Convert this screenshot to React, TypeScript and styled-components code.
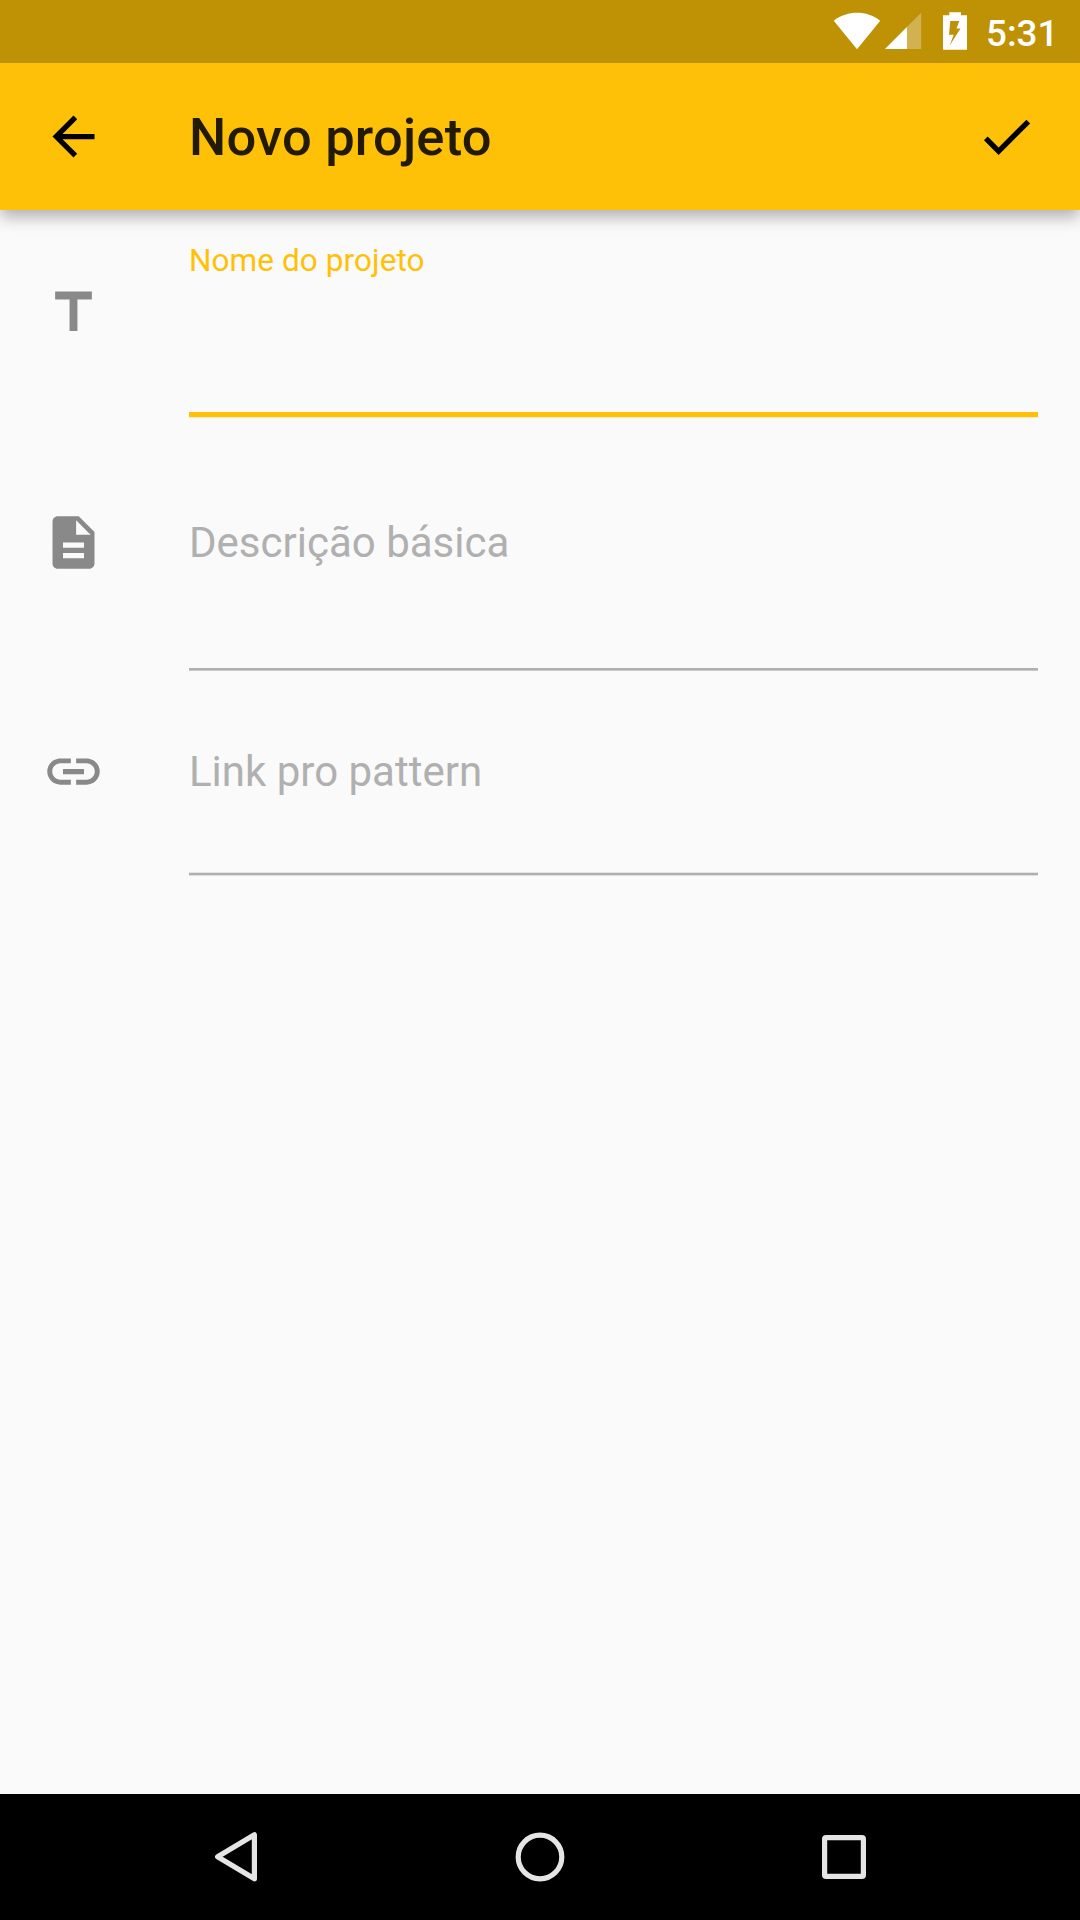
import React from "react";
import styled, { createGlobalStyle } from "styled-components";

const amber = "#ffc107";

const GlobalStyle = createGlobalStyle`
  *, *::before, *::after { box-sizing: border-box; }
  html, body { margin: 0; padding: 0; background: #fafafa; }
  body { font-family: Roboto, "Noto Sans", sans-serif; }
`;

const Screen = styled.div`
  display: flex;
  flex-direction: column;
  width: 1080px;
  height: 1920px;
  overflow: hidden;
  background: #fafafa;
`;

const StatusBar = styled.div`
  position: relative;
  z-index: 2;
  display: flex;
  flex: none;
  justify-content: flex-end;
  height: 63px;
  padding-right: 26px;
  background: #bf9105;
  color: #fff;
`;

const StatusIcons = styled.svg`
  width: 146px;
  height: 63px;
  margin-right: 6px;
`;

const Clock = styled.time`
  width: 68px;
  font-size: 36.75px;
  font-weight: 500;
  line-height: 67px;
  white-space: nowrap;
`;

const AppBar = styled.header`
  position: relative;
  z-index: 1;
  display: flex;
  flex: none;
  align-items: center;
  height: 147px;
  padding: 0 42px;
  background: ${amber};
  box-shadow:
    0 5px 14px -3px rgba(0, 0, 0, 0.15),
    0 10px 14px 0 rgba(0, 0, 0, 0.14),
    0 3px 20px 0 rgba(0, 0, 0, 0.08);
`;

const Title = styled.h1`
  flex: 1;
  margin: 0 0 0 84px;
  color: #221b02;
  font-size: 52.5px;
  font-weight: 500;
  line-height: 62px;
  letter-spacing: 0.2px;
`;

const IconButton = styled.button`
  display: block;
  padding: 0;
  border: 0;
  background: none;
  color: #000;
  line-height: 0;
`;

const Icon = styled.svg`
  display: block;
  width: 63px;
  height: 63px;
  fill: currentColor;
`;

const Form = styled.form`
  display: flex;
  flex: 1;
  flex-direction: column;
  padding: 0 42px;
`;

const FieldRow = styled.div<{ $height: number }>`
  display: flex;
  gap: 84px;
  height: ${(p) => p.$height}px;
`;

const Leading = styled.div<{ $top: number }>`
  padding-top: ${(p) => p.$top}px;
  color: #898989;
`;

const Field = styled.label<{ $top: number }>`
  display: flex;
  flex: 1;
  flex-direction: column;
  justify-content: space-between;
  padding-top: ${(p) => p.$top}px;
`;

const Label = styled.span<{ $active?: boolean }>`
  color: ${(p) => (p.$active ? amber : "#b0b0b0")};
  font-size: ${(p) => (p.$active ? 31.5 : 42)}px;
  line-height: ${(p) => (p.$active ? 38 : 50)}px;
  letter-spacing: ${(p) => (p.$active ? 0.08 : 0)}px;
`;

type LineKind = "active" | "upper" | "centered";

const lineStyles: Record<LineKind, { height: number; fill: string }> = {
  active: { height: 6, fill: `linear-gradient(${amber} 5px, #fbecc0 5px)` },
  upper: { height: 3, fill: "linear-gradient(#b0b0b0 2px, #c8c8c8 2px)" },
  centered: {
    height: 4,
    fill: "linear-gradient(#e4e4e4 1px, #b0b0b0 1px 3px, #dedede 3px)",
  },
};

const Underline = styled.div<{ $kind: LineKind }>`
  height: ${(p) => lineStyles[p.$kind].height}px;
  background: ${(p) => lineStyles[p.$kind].fill};
`;

const NavBar = styled.nav`
  display: flex;
  flex: none;
  align-items: center;
  justify-content: center;
  gap: 240px;
  height: 126px;
  background: #000;
`;

const NavIcon = styled.svg`
  width: 64px;
  height: 64px;
  fill: none;
  stroke: #e5e5e5;
  stroke-width: 5.2;
  stroke-linejoin: round;
`;

const icons = {
  back: "M20 11H7.83l5.59-5.59L12 4l-8 8 8 8 1.41-1.41L7.83 13H20v-2z",
  check: "M9 16.17L4.83 12l-1.42 1.41L9 19 21 7l-1.41-1.41z",
  title: "M5 4v3h5.5v12h3V7H19V4z",
  description:
    "M14 2H6c-1.1 0-1.99.9-1.99 2L4 20c0 1.1.89 2 1.99 2H18c1.1 0 2-.9 2-2V8l-6-6zm2 16H8v-2h8v2zm0-4H8v-2h8v2zm-3-5V3.5L18.5 9H13z",
  link: "M3.9 12c0-1.71 1.39-3.1 3.1-3.1h4V7H7c-2.76 0-5 2.24-5 5s2.24 5 5 5h4v-1.9H7c-1.71 0-3.1-1.39-3.1-3.1zM8 13h8v-2H8v2zm9-6h-4v1.9h4c1.71 0 3.1 1.39 3.1 3.1s-1.39 3.1-3.1 3.1h-4V17h4c2.76 0 5-2.24 5-5s-2.24-5-5-5z",
};

function Glyph({ name }: { name: keyof typeof icons }) {
  return (
    <Icon viewBox="0 0 24 24" aria-hidden="true">
      <path d={icons[name]} />
    </Icon>
  );
}

const fields = [
  { label: "Nome do projeto", icon: "title", height: 208, iconTop: 70.5, top: 32, line: "active" },
  { label: "Descrição básica", icon: "description", height: 253, iconTop: 93, top: 100, line: "upper" },
  { label: "Link pro pattern", icon: "link", height: 205, iconTop: 69, top: 76, line: "centered" },
] as const;

export default function App() {
  return (
    <Screen>
      <GlobalStyle />
      <StatusBar>
        <StatusIcons viewBox="0 0 146 63" aria-hidden="true">
          <path fill="#fff" d="M-0.300 20.700C13.500 10.200 32.500 10.200 46.200 20.700L23 49.200z" />
          <path fill="#fff" fillOpacity="0.3" d="M87.200 12.700V49H51z" />
          <path fill="#fff" d="M73 27.100V49H51z" />
          <path
            fill="#fff"
            fillRule="evenodd"
            d="M115.300 12.200h11.700v3h6v34.600h-24v-34.600h6.300zM116.300 21L115 34.800h4.700L115.700 45.600L126.500 28.500h-4l2.800-7.500z"
          />
        </StatusIcons>
        <Clock>5:31</Clock>
      </StatusBar>
      <AppBar>
        <IconButton aria-label="Voltar">
          <Glyph name="back" />
        </IconButton>
        <Title>Novo projeto</Title>
        <IconButton aria-label="Salvar">
          <Glyph name="check" />
        </IconButton>
      </AppBar>
      <Form>
        {fields.map((f) => (
          <FieldRow key={f.label} $height={f.height}>
            <Leading $top={f.iconTop}>
              <Glyph name={f.icon} />
            </Leading>
            <Field $top={f.top}>
              <Label $active={f.line === "active"}>{f.label}</Label>
              <Underline $kind={f.line} />
            </Field>
          </FieldRow>
        ))}
      </Form>
      <NavBar>
        <NavIcon viewBox="0 0 64 64">
          <path d="M50.400 9.800v44L13.600 31.800z" />
        </NavIcon>
        <NavIcon viewBox="0 0 64 64">
          <circle cx="32" cy="32" r="21.800" />
        </NavIcon>
        <NavIcon viewBox="0 0 64 64">
          <rect x="12.600" y="12.600" width="38.800" height="38.800" rx="1.500" />
        </NavIcon>
      </NavBar>
    </Screen>
  );
}
